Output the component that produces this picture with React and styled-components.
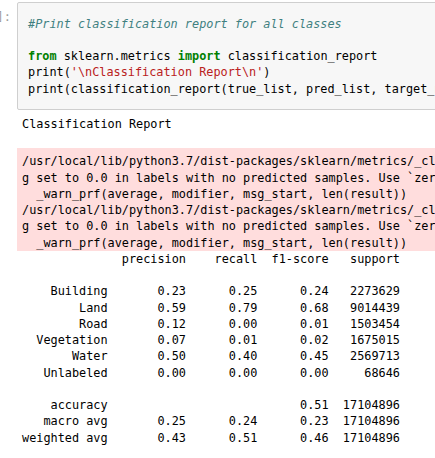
import React from 'react';
import styled, {createGlobalStyle} from 'styled-components';

const mono = `"DejaVu Sans Mono", "Liberation Mono", monospace`;

const GlobalStyle = createGlobalStyle`
	html, body {
		margin: 0;
		padding: 0;
		background: #fff;
		overflow: hidden;
	}
	body {
		font-family: ${mono};
		font-size: 11.85px;
		line-height: 16.25px;
		color: #000;
	}
`;

const reportRows = [
	['Building', '0.23', '0.25', '0.24', '2273629'],
	['Land', '0.59', '0.79', '0.68', '9014439'],
	['Road', '0.12', '0.00', '0.01', '1503454'],
	['Vegetation', '0.07', '0.01', '0.02', '1675015'],
	['Water', '0.50', '0.40', '0.45', '2569713'],
	['Unlabeled', '0.00', '0.00', '0.00', '68646']
];

const pad = (s, n) => s.padStart(n, ' ');

const buildReport = () => {
	const lines = [];
	lines.push(' '.repeat(12) + ' ' + pad('precision', 10) + pad('recall', 10) + pad('f1-score', 10) + pad('support', 10));
	lines.push('');
	reportRows.forEach(([name, p, r, f, s]) => {
		lines.push(pad(name, 12) + ' ' + pad(p, 10) + pad(r, 10) + pad(f, 10) + pad(s, 10));
	});
	lines.push('');
	lines.push(pad('accuracy', 12) + ' ' + ' '.repeat(20) + pad('0.51', 10) + pad('17104896', 10));
	lines.push(pad('macro avg', 12) + ' ' + pad('0.25', 10) + pad('0.24', 10) + pad('0.23', 10) + pad('17104896', 10));
	lines.push(pad('weighted avg', 12) + ' ' + pad('0.43', 10) + pad('0.51', 10) + pad('0.46', 10) + pad('17104896', 10));
	return lines.join('\n');
};

const warnLine1 = '/usr/local/lib/python3.7/dist-packages/sklearn/metrics/_classification.py:1318: UndefinedMetricWarning: Precision and F-score are ill-defined and bein';
const warnLine2 = 'g set to 0.0 in labels with no predicted samples. Use `zero_division` parameter to control this behavior.';
const warnLine3 = '  _warn_prf(average, modifier, msg_start, len(result))';

export default function App() {
	return (
		<Notebook>
			<GlobalStyle/>
			<InputRow>
				<Prompt>
					<PromptText>In [ ]:</PromptText>
				</Prompt>
				<CodeBox>
					<Code>
						<Comment>#Print classification report for all classes</Comment>{'\n'}
						{'\n'}
						<Keyword>from</Keyword> sklearn.metrics <Keyword>import</Keyword> classification_report{'\n'}
						print(<Str>'\nClassification Report\n'</Str>){'\n'}
						print(classification_report(true_list, pred_list, target_names=labels))
					</Code>
				</CodeBox>
			</InputRow>
			<OutputArea>
				<Stdout>{'Classification Report\n '}</Stdout>
				<Stderr>
					{[warnLine1, warnLine2, warnLine3, warnLine1, warnLine2, warnLine3].join('\n')}
				</Stderr>
				<Stdout>{buildReport()}</Stdout>
			</OutputArea>
		</Notebook>
	);
}

const Notebook = styled.div`
	padding-top: 2px;
	width: 1000px;
`;

const InputRow = styled.div`
	display: flex;
	align-items: flex-start;
`;

const Prompt = styled.div`
	display: flex;
	justify-content: flex-end;
	width: 11px;
	flex: none;
	padding-top: 7px;
	margin-right: 6px;
	white-space: nowrap;
`;

const PromptText = styled.span`
	color: #9e9e9e;
	font-size: 12px;
`;

const CodeBox = styled.div`
	flex: 1;
	background: #f7f7f7;
	border: 1px solid #cfcfcf;
	border-radius: 2px;
	padding: 12.5px 10px 12px 10px;
`;

const Code = styled.pre`
	margin: 0;
	font: inherit;
	white-space: pre;
`;

const Comment = styled.span`
	color: #408080;
	font-style: italic;
`;

const Keyword = styled.span`
	color: #008000;
	font-weight: bold;
`;

const Str = styled.span`
	color: #ba2121;
`;

const OutputArea = styled.div`
	margin-left: 17px;
	padding-top: 6px;
`;

const Stdout = styled.pre`
	margin: 0;
	font: inherit;
	padding-left: 5px;
	white-space: pre;
`;

const Stderr = styled(Stdout)`
	background: #fdd;
	padding-top: 5px;
`;
